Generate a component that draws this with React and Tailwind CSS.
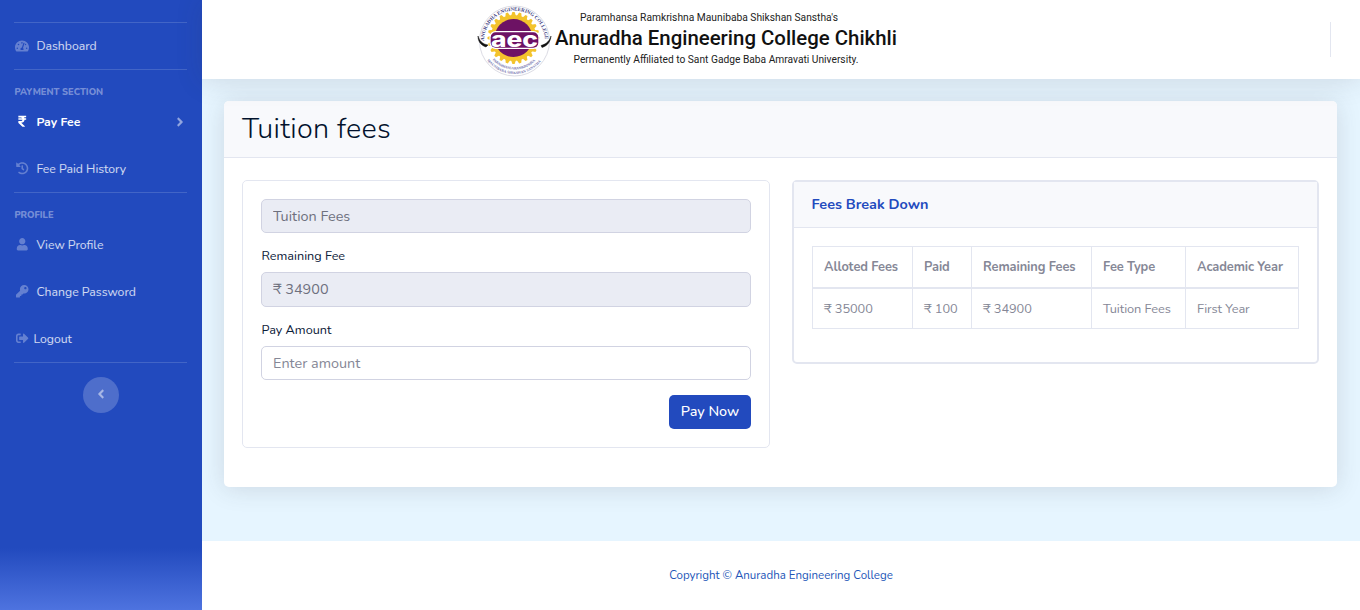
import { FaAngleLeft, FaAngleRight, FaHistory, FaKey, FaRupeeSign, FaSignOutAlt, FaTachometerAlt, FaUser } from "react-icons/fa";

function Divider() {
  return <hr className="mr-[15px] ml-[14px] h-px border-0 bg-white/15" />;
}

function Heading({ children }) {
  return (
    <div className="flex h-[28px] items-center px-[14.4px] pt-[15px] text-[9.36px] leading-[14px] font-extrabold text-white/40">
      {children}
    </div>
  );
}

function NavItem({ icon: Icon, label, active, height = "h-[47px]", gap = "gap-[6px]", pad = "pt-[2px]", iconClass = "size-[12.5px]" }) {
  return (
    <a className={"flex items-center pr-[15px] pl-[14.4px] text-[12.24px] " + height + " " + gap + " " + pad + (active ? " font-bold text-white" : " text-white/80")}>
      <span className="flex w-4 justify-center pb-[2px]">
        <Icon className={iconClass + (active ? " text-white" : " text-white/30")} />
      </span>
      <span className="whitespace-nowrap">{label}</span>
      {active && <FaAngleRight className="mb-[2px] ml-auto size-[14px] text-white/50" />}
    </a>
  );
}

function Sidebar() {
  return (
    <aside className="flex w-[202px] shrink-0 flex-col bg-[linear-gradient(180deg,#224abe_0px,#224abe_548px,#4e73df_610px)] pt-[22px]">
      <Divider />
      <NavItem icon={FaTachometerAlt} label="Dashboard" height="h-[46px]" pad="pt-0" iconClass="size-[14px] mt-[2px]" />
      <Divider />
      <Heading>PAYMENT SECTION</Heading>
      <NavItem icon={FaRupeeSign} label="Pay Fee" active />
      <NavItem icon={FaHistory} label="Fee Paid History" />
      <Divider />
      <Heading>PROFILE</Heading>
      <NavItem icon={FaUser} label="View Profile" />
      <NavItem icon={FaKey} label="Change Password" />
      <NavItem icon={FaSignOutAlt} label="Logout" gap="gap-[3px]" />
      <Divider />
      <button className="mt-[14px] flex size-9 items-center justify-center self-center rounded-full bg-white/20">
        <FaAngleLeft className="mr-[1px] mb-[2px] size-[14px] text-white/50" />
      </button>
    </aside>
  );
}

const teeth = Array.from({ length: 24 }, (_, i) => i * 15);

function Logo() {
  const serif = { fontFamily: "Liberation Serif, serif", fontWeight: 700 };
  const letters = { x: 15, y: 43.5, textLength: 47, lengthAdjust: "spacingAndGlyphs", fontFamily: "Inter, sans-serif", fontWeight: 800, fontSize: 21 };
  return (
    <svg width="76" height="76" viewBox="0 0 76 76" className="shrink-0">
      <defs>
        <path id="arcTop" d="M8.800 45 A30.500 30.500 0 1 1 68.200 45" />
        <path id="arcInner" d="M12 50 A29.500 29.500 0 0 0 65 50" />
        <path id="arcOuter" d="M8 52 A34 34 0 0 0 69 52" />
      </defs>
      <circle cx="38.500" cy="38" r="35" fill="#fff" stroke="#dcdce4" strokeWidth="1" />
      <g fill="#f3c32c">
        <circle cx="37.500" cy="35" r="23" />
        {teeth.map((a) => (
          <path key={a} d="M35 13 L36.400 9 H38.600 L40 13 Z" transform={`rotate(${a} 37.5 35)`} />
        ))}
      </g>
      <circle cx="37.500" cy="35" r="19" fill="#6d1264" />
      <text {...serif} fontSize="5" fill="#3c3c80">
        <textPath href="#arcTop" startOffset="7" textLength="94" lengthAdjust="spacingAndGlyphs">ANURADHA ENGINEERING COLLEGE</textPath>
      </text>
      <text {...serif} fontSize="3.600" fill="#7474ae">
        <textPath href="#arcInner" startOffset="8" textLength="48">PARAMHANSA RAMKRISHNA</textPath>
      </text>
      <text {...serif} fontSize="3.600" fill="#7474ae">
        <textPath href="#arcOuter" startOffset="6" textLength="62">MAUNIBABA SHIKSHAN SANSTHA</textPath>
      </text>
      <path d="M2 33 C2 38.500 4.500 42 10 44 L12 42 C6.500 41 3.500 38 2 33 Z" fill="#111" stroke="#111" strokeWidth="0.500" />
      <path d="M75 33 C74.500 38.500 72 42.500 66 44.500 L65 42.500 C70.500 41 73.500 38 75 33 Z" fill="#111" stroke="#111" strokeWidth="0.500" />
      <rect x="13.500" y="28" width="50" height="18" rx="6" fill="#fff" />
      <rect x="14.700" y="29.200" width="47.600" height="15.600" rx="5" fill="#6d1264" />
      <text {...letters} fill="#fff">aec</text>
    </svg>
  );
}

function TopBar() {
  return (
    <header className="z-10 flex h-[79px] shrink-0 bg-white font-[Roboto,sans-serif] shadow-[0_2px_25px_rgba(58,59,69,0.15)]">
      <div className="ml-[274px] flex pt-[3px]">
        <Logo />
        <div className="ml-[2px] flex w-[344px] flex-col items-center pt-[7px] whitespace-nowrap text-[#222]">
          <p className="mr-[34px] text-[10.25px] leading-[15px]">Paramhansa Ramkrishna Maunibaba Shikshan Sanstha's</p>
          <p className="text-[20.4px] leading-[26px] font-medium text-[#111]">Anuradha Engineering College Chikhli</p>
          <p className="mt-px mr-[20px] text-[10.22px] leading-[16px]">Permanently Affiliated to Sant Gadge Baba Amravati University.</p>
        </div>
      </div>
      <div className="mt-[22px] mr-[29px] ml-auto h-[35px] w-px bg-[#e3e6f0]" />
    </header>
  );
}

function PaymentForm() {
  const field = "block w-full rounded-[5px] border border-[#d1d3e2] px-[11px] text-[14.4px] text-[#6e707e] placeholder:text-[#858796]";
  const label = "block pl-[0.5px] text-[12.65px] leading-[19px] text-[#0b2038]";
  return (
    <section className="h-[268px] w-[528px] rounded-[5px] border border-[#e3e6f0] px-[18px] pt-[18px]">
      <input className={field + " h-[34px] bg-[#eaecf4]"} defaultValue="Tuition Fees" disabled />
      <div className="mt-[13px]">
        <label className={label}>Remaining Fee</label>
        <input className={field + " mt-[7px] h-[35px] bg-[#eaecf4] pb-[2px]"} defaultValue="₹ 34900" disabled />
      </div>
      <div className="mt-[13px]">
        <label className={label}>Pay Amount</label>
        <input className={field + " mt-[7px] h-[34px] bg-white"} placeholder="Enter amount" />
      </div>
      <button className="mt-[15px] ml-auto flex h-[34px] w-[82px] items-center justify-center rounded-[5px] bg-[#224abe] text-[14.4px] font-medium text-white">
        Pay Now
      </button>
    </section>
  );
}

const columns = ["Alloted Fees", "Paid", "Remaining Fees", "Fee Type", "Academic Year"];
const row = ["₹ 35000", "₹ 100", "₹ 34900", "Tuition Fees", "First Year"];

function BreakDown() {
  return (
    <section className="h-[184px] w-[527px] rounded-[5px] border-2 border-[#e3e6f0]">
      <h6 className="flex h-[46px] items-center border-b border-[#e3e6f0] bg-[#f8f9fc] px-[17.5px] text-[14.4px] font-bold text-[#224abe]">
        Fees Break Down
      </h6>
      <div className="px-[18px] pt-[18px]">
        <table className="w-[487px] table-fixed border-collapse text-left text-[12.8px] tracking-[-0.08px] text-[#858796]">
          <colgroup>
            <col className="w-[100px]" />
            <col className="w-[59px]" />
            <col className="w-[120px]" />
            <col className="w-[94px]" />
            <col className="w-[113px]" />
          </colgroup>
          <thead>
            <tr className="h-[41px]">
              {columns.map((c) => (
                <th key={c} className="border border-b-2 border-[#e3e6f0] pt-[2px] pl-[11px] font-bold whitespace-nowrap">{c}</th>
              ))}
            </tr>
          </thead>
          <tbody>
            <tr className="h-[41px]">
              {row.map((c) => (
                <td key={c} className="border border-[#e3e6f0] pt-[2px] pl-[11px] whitespace-nowrap">{c}</td>
              ))}
            </tr>
          </tbody>
        </table>
      </div>
    </section>
  );
}

export default function App() {
  return (
    <div className="flex h-[610px] w-[1360px] overflow-hidden bg-white font-[Nunito,Lato,'Noto_Sans',sans-serif]">
      <Sidebar />
      <div className="flex min-w-0 flex-1 flex-col bg-[#e6f5ff]">
        <TopBar />
        <main className="h-[462px] px-[22px] pt-[22px]">
          <div className="mr-[1px] h-[386px] overflow-hidden rounded-[5px] bg-white shadow-[0_2px_25px_rgba(58,59,69,0.15)]">
            <h1 className="flex h-[57px] items-center border-b border-[#e3e6f0] bg-[#f8f9fc] px-[18px] text-[28.8px] font-light tracking-[0.3px] text-[#02122c]">
              Tuition fees
            </h1>
            <div className="flex gap-[22px] px-[18px] pt-[22px]">
              <PaymentForm />
              <BreakDown />
            </div>
          </div>
        </main>
        <footer className="flex flex-1 items-center justify-center bg-white text-[11.52px] text-[#2255b8]">
          Copyright © Anuradha Engineering College
        </footer>
      </div>
    </div>
  );
}
